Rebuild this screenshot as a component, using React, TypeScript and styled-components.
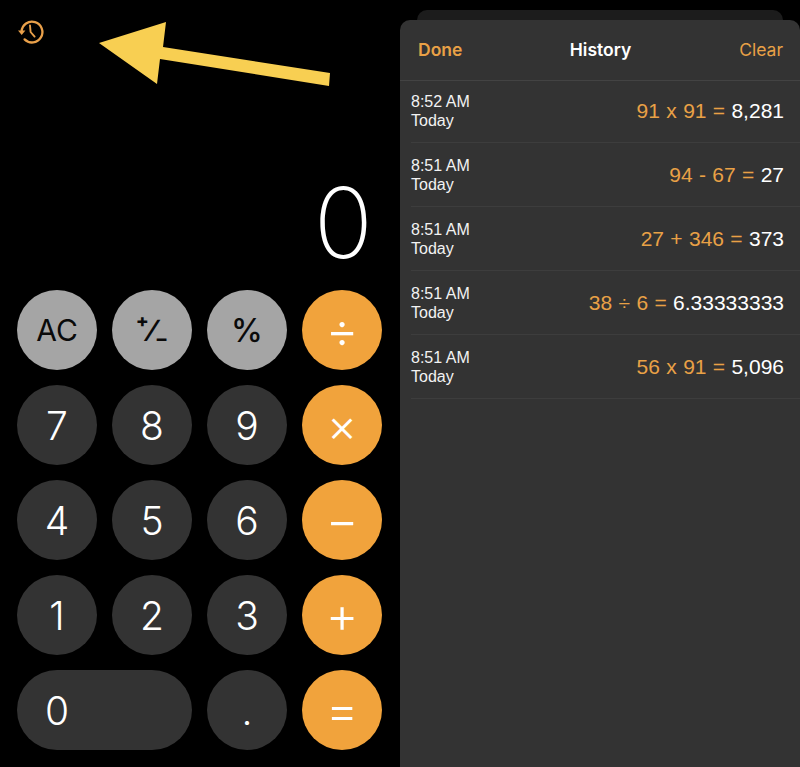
import React from 'react';
import styled, { createGlobalStyle } from 'styled-components';

type KeyKind = 'fn' | 'num' | 'op';

interface KeyDef {
  id: string;
  label: React.ReactNode;
  kind: KeyKind;
  wide?: boolean;
}

const Sign = styled.span`
  font-size: 31px;
  font-weight: 600;
`;

const Percent = styled.span`
  font-size: 32px;
  font-weight: 500;
`;

const Times = styled.span`
  font-size: 46px;
  font-weight: 300;
`;

const keys: KeyDef[] = [
  { id: 'ac', label: 'AC', kind: 'fn' },
  { id: 'sign', label: <Sign>⁺∕₋</Sign>, kind: 'fn' },
  { id: 'pct', label: <Percent>%</Percent>, kind: 'fn' },
  { id: 'div', label: '÷', kind: 'op' },
  { id: '7', label: '7', kind: 'num' },
  { id: '8', label: '8', kind: 'num' },
  { id: '9', label: '9', kind: 'num' },
  { id: 'mul', label: <Times>×</Times>, kind: 'op' },
  { id: '4', label: '4', kind: 'num' },
  { id: '5', label: '5', kind: 'num' },
  { id: '6', label: '6', kind: 'num' },
  { id: 'sub', label: '−', kind: 'op' },
  { id: '1', label: '1', kind: 'num' },
  { id: '2', label: '2', kind: 'num' },
  { id: '3', label: '3', kind: 'num' },
  { id: 'add', label: '+', kind: 'op' },
  { id: '0', label: '0', kind: 'num', wide: true },
  { id: 'dot', label: '.', kind: 'num' },
  { id: 'eq', label: '=', kind: 'op' },
];

const history = [
  { time: '8:52 AM', sum: '91 x 91 =', result: '8,281' },
  { time: '8:51 AM', sum: '94 - 67 =', result: '27' },
  { time: '8:51 AM', sum: '27 + 346 =', result: '373' },
  { time: '8:51 AM', sum: '38 ÷ 6 =', result: '6.33333333' },
  { time: '8:51 AM', sum: '56 x 91 =', result: '5,096' },
];

const keyColors: Record<KeyKind, { bg: string; fg: string; size: number; weight: number }> = {
  fn: { bg: '#a5a5a5', fg: '#0a0a0a', size: 30, weight: 400 },
  num: { bg: '#333333', fg: '#ffffff', size: 39, weight: 350 },
  op: { bg: '#f1a33c', fg: '#ffffff', size: 50, weight: 280 },
};

const GlobalStyle = createGlobalStyle`
  html, body {
    margin: 0;
    background: #000;
    font-family: Inter, "Liberation Sans", sans-serif;
  }
`;

const Page = styled.div`
  position: relative;
  width: 800px;
  height: 767px;
  display: flex;
  overflow: hidden;
  background: #000;
`;

const Calculator = styled.div`
  width: 400px;
  display: flex;
  flex-direction: column;
`;

const TopBar = styled.div`
  height: 160px;
  padding: 18px 0 0 17px;
  box-sizing: border-box;
`;

const Display = styled.div`
  height: 115px;
  padding: 5px 27px 0 0;
  box-sizing: border-box;
  text-align: right;
  color: #fff;
  font-size: 98px;
  font-weight: 240;
  line-height: 115px;
`;

const Keypad = styled.div`
  margin-top: 15px;
  padding-left: 17px;
  display: grid;
  grid-template-columns: repeat(4, 80px);
  grid-auto-rows: 80px;
  gap: 15px;
`;

const Key = styled.div<{ $kind: KeyKind; $wide?: boolean }>`
  grid-column: ${(p) => (p.$wide ? 'span 2' : 'span 1')};
  border-radius: 40px;
  display: flex;
  align-items: center;
  justify-content: ${(p) => (p.$wide ? 'flex-start' : 'center')};
  padding-left: ${(p) => (p.$wide ? '28px' : '0')};
  background: ${(p) => keyColors[p.$kind].bg};
  color: ${(p) => keyColors[p.$kind].fg};
  font-size: ${(p) => keyColors[p.$kind].size}px;
  font-weight: ${(p) => keyColors[p.$kind].weight};
`;

const SheetColumn = styled.div`
  width: 400px;
  padding-top: 10px;
  box-sizing: border-box;
  display: flex;
  flex-direction: column;
`;

const SheetBehind = styled.div`
  height: 10px;
  margin: 0 17px;
  border-radius: 10px 10px 0 0;
  background: #1c1c1c;
`;

const Sheet = styled.div`
  flex: 1;
  border-radius: 10px 10px 0 0;
  background: #333333;
`;

const SheetHeader = styled.div`
  height: 61px;
  padding: 0 17px 2px 18px;
  display: grid;
  grid-template-columns: 1fr auto 1fr;
  align-items: center;
  border-bottom: 1px solid #434343;
  box-sizing: border-box;
  font-size: 17.5px;
`;

const Done = styled.span`
  color: #e9a146;
  font-weight: 600;
`;

const Title = styled.span`
  color: #fff;
  font-weight: 600;
`;

const Clear = styled.span`
  color: #e9a146;
  text-align: right;
`;

const HistoryList = styled.div`
  margin-top: -2px;
`;

const Row = styled.div`
  height: 64px;
  margin-left: 11px;
  padding-right: 16px;
  display: flex;
  align-items: center;
  justify-content: space-between;
  border-bottom: 1px solid #3d3d3d;
  box-sizing: border-box;
  font-family: "Liberation Sans", Arial, sans-serif;
`;

const When = styled.div`
  color: #f2f2f2;
  font-size: 16px;
  line-height: 19px;
`;

const Sum = styled.div`
  color: #e9a146;
  font-size: 21px;
  word-spacing: 0.5px;
`;

const Result = styled.span`
  color: #fff;
`;

const Arrow = styled.svg`
  position: absolute;
  left: 0;
  top: 0;
  pointer-events: none;
`;

const HistoryIcon = () => (
  <svg width="28" height="28" viewBox="0 0 28 28" fill="none">
    <path
      d="M4.6 13.5a10.4 10.4 0 1 1 3 7.9"
      stroke="#e9a04a"
      strokeWidth="2.3"
      strokeLinecap="round"
    />
    <path d="M1 12.5h7.4l-3.7 4.6z" fill="#e9a04a" />
    <path d="M13 7.5l.6 6.5 4 4.6" stroke="#e9a04a" strokeWidth="1.9" strokeLinecap="round" strokeLinejoin="round" />
  </svg>
);

const App = (): React.ReactElement => (
  <Page>
    <GlobalStyle />
    <Calculator>
      <TopBar>
        <HistoryIcon />
      </TopBar>
      <Display>0</Display>
      <Keypad>
        {keys.map((k) => (
          <Key key={k.id} $kind={k.kind} $wide={k.wide}>
            {k.label}
          </Key>
        ))}
      </Keypad>
    </Calculator>
    <SheetColumn>
      <SheetBehind />
      <Sheet>
        <SheetHeader>
          <Done>Done</Done>
          <Title>History</Title>
          <Clear>Clear</Clear>
        </SheetHeader>
        <HistoryList>
          {history.map((h) => (
            <Row key={h.sum}>
              <When>
                {h.time}
                <br />
                Today
              </When>
              <Sum>
                {h.sum} <Result>{h.result}</Result>
              </Sum>
            </Row>
          ))}
        </HistoryList>
      </Sheet>
    </SheetColumn>
    <Arrow width="800" height="767" viewBox="0 0 800 767">
      <polygon
        points="99,43 166,22 163,47 330,73 329,86 160,59 157,84"
        fill="#f8cf52"
      />
    </Arrow>
  </Page>
);

export default App;
